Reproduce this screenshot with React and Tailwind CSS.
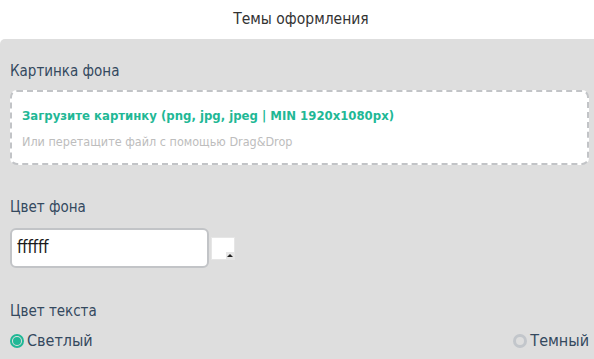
export default function App() {
  return (
    <div className="w-[594px] h-[359px] overflow-hidden bg-white" style={{ fontFamily: '"DejaVu Sans Condensed", "DejaVu Sans", sans-serif' }}>
      <div className="h-[39px] flex items-center justify-center pl-[8px] text-[15.5px] text-[#333]">Темы оформления</div>
      <div className="bg-[#dedede] rounded-tl-[5px] pl-[10px] pr-[5px] pt-[22px] h-[320px]">
        <div className="h-[20px] leading-[20px] text-[15px] text-[#34495e]">Картинка фона</div>
        <div className="mt-[9px] h-[75px] bg-white border-2 border-dashed border-[#c2c4c7] rounded-[7px] px-[10px] pt-[14px]">
          <div className="h-[20px] leading-[20px] text-[13px] font-bold text-[#1fb896]">Загрузите картинку (png, jpg, jpeg | MIN 1920x1080px)</div>
          <div className="mt-[6px] h-[20px] leading-[20px] text-[12.5px] text-[#bdbdbd]">Или перетащите файл с помощью Drag&amp;Drop</div>
        </div>
        <div className="mt-[32px] h-[20px] leading-[20px] text-[15px] text-[#34495e]">Цвет фона</div>
        <div className="mt-[11px] flex items-center gap-[2px]">
          <div className="w-[199px] h-[40px] bg-white border-2 border-[#c2c4c7] rounded-[6px] flex items-center px-[5px] text-[17px] text-[#1a1a1a]">ffffff</div>
          <div className="relative w-[24px] h-[23px] bg-white border border-[#e6e6e6]">
            <div className="absolute right-0 bottom-0 w-[8px] h-[7px] bg-[#e6e6e6] flex items-center justify-center">
              <div className="w-0 h-0 border-l-[3px] border-r-[3px] border-b-[3px] border-l-transparent border-r-transparent border-b-[#222]" />
            </div>
          </div>
        </div>
        <div className="mt-[33px] h-[20px] leading-[20px] text-[15px] text-[#34495e]">Цвет текста</div>
        <div className="mt-[10px] h-[20px] flex items-center justify-between">
          <div className="flex items-center gap-[3px]">
            <div className="w-[14px] h-[14px] rounded-full border-2 border-[#1fb896] flex items-center justify-center">
              <div className="w-[8px] h-[8px] rounded-full bg-[#1fb896]" />
            </div>
            <span className="text-[16px] text-[#34495e]">Светлый</span>
          </div>
          <div className="flex items-center gap-[3px]">
            <div className="w-[14px] h-[14px] rounded-full border-[3px] border-[#c2c6cb]" />
            <span className="text-[16px] text-[#34495e]">Темный</span>
          </div>
        </div>
      </div>
    </div>
  );
}
